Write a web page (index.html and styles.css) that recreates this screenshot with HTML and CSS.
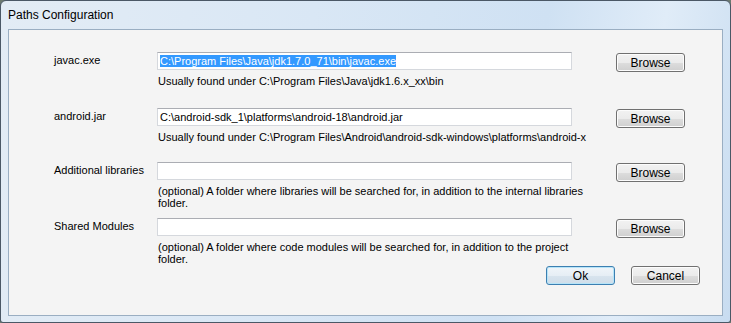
FILE: index.html
```html
<!DOCTYPE html>
<html lang="en">
<head>
    <meta charset="UTF-8">
    <title>Paths Configuration</title>
    <link rel="stylesheet" href="styles.css">
</head>
<body>
    <div class="window">
        <div class="titlebar">Paths Configuration</div>
        <div class="client">
            <div class="row r1">
                <label>javac.exe</label>
                <div class="field">
                    <div class="input"><span class="sel">C:\Program Files\Java\jdk1.7.0_71\bin\javac.exe</span></div>
                    <div class="hint">Usually found under C:\Program Files\Java\jdk1.6.x_xx\bin</div>
                </div>
                <button class="btn">Browse</button>
            </div>
            <div class="row r2">
                <label>android.jar</label>
                <div class="field">
                    <div class="input">C:\android-sdk_1\platforms\android-18\android.jar</div>
                    <div class="hint">Usually found under C:\Program Files\Android\android-sdk-windows\platforms\android-x</div>
                </div>
                <button class="btn">Browse</button>
            </div>
            <div class="row r3">
                <label>Additional libraries</label>
                <div class="field">
                    <div class="input"></div>
                    <div class="hint">(optional) A folder where libraries will be searched for, in addition to the internal libraries<br>folder.</div>
                </div>
                <button class="btn">Browse</button>
            </div>
            <div class="row r4">
                <label>Shared Modules</label>
                <div class="field">
                    <div class="input"></div>
                    <div class="hint">(optional) A folder where code modules will be searched for, in addition to the project<br>folder.</div>
                </div>
                <button class="btn">Browse</button>
            </div>
            <div class="actions">
                <button class="btn default">Ok</button>
                <button class="btn">Cancel</button>
            </div>
        </div>
    </div>
</body>
</html>
```

FILE: styles.css
```css
* { box-sizing: border-box; }
body { margin: 0; font-family: "Liberation Sans", Arial, sans-serif; font-size: 11px; color: #000; background: #6d7a70; }
.window { width: 731px; height: 323px; border: 1px solid #4b5866; border-radius: 6px 6px 3px 3px; background: linear-gradient(100deg, #e3ecf5 0%, #d9e7f5 40%, #cfe1f3 70%, #e0ecf8 85%, #c8dcf0 100%); overflow: hidden; }
.titlebar { height: 28px; padding: 7px 0 0 7px; font-size: 12px; color: #000; }
.client { height: 287px; margin: 0 7px; border: 1px solid #9aaec2; background: #f4f4f4; padding: 22px 0 0 45px; }
.row { display: grid; grid-template-columns: 103px 415px 69px; align-items: start; }
.r1 { height: 56px; }
.r2 { height: 54px; }
.r3 { height: 56px; }
.r4 { height: 49px; }
label { line-height: 16px; }
.input { height: 18px; border: 1px solid #d5d8dd; border-top-color: #abadb3; background: #fff; padding: 1px 2px; line-height: 14px; white-space: nowrap; overflow: hidden; }
.sel { background: #3399ff; color: #fff; }
.hint { margin-top: 5px; line-height: 12px; padding-left: 1px; white-space: nowrap; }
.btn { width: 69px; height: 19px; margin: 1px 0 0 44px; padding: 0; font-family: inherit; font-size: 12px; color: #000; border: 1px solid #707070; border-radius: 3px; background: linear-gradient(#f2f2f2 0%, #ebebeb 50%, #dddddd 51%, #cfcfcf 100%); box-shadow: inset 0 0 0 1px #fcfcfc; }
.actions { display: flex; justify-content: flex-end; gap: 16px; padding-right: 22px; margin-top: -1px; }
.actions .btn { margin: 0; }
.btn.default { border-color: #3c7fb1; background: linear-gradient(#f0f5f9 0%, #e6eef5 50%, #d8e4ee 51%, #cfdde9 100%); box-shadow: inset 0 0 0 1px #b6e4f8; }
```
